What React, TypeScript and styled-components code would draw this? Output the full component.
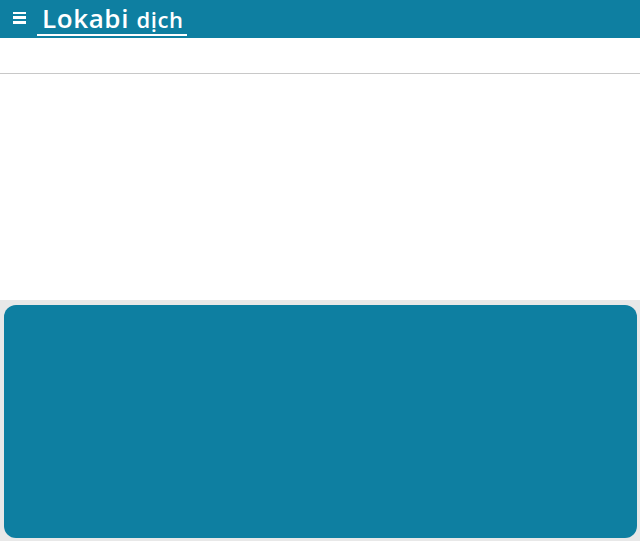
import styled, { createGlobalStyle } from 'styled-components';

const GlobalStyle = createGlobalStyle`
  html, body {
    margin: 0;
    padding: 0;
    background: #ffffff;
    font-family: "Open Sans", Arial, sans-serif;
  }
`;

const Page = styled.div`
  display: flex;
  flex-direction: column;
  height: 541px;
  overflow: hidden;
`;

const Header = styled.header`
  height: 38px;
  background-color: #0e7fa1;
  display: flex;
  align-items: center;
  padding-left: 13px;
  gap: 11px;
  flex-shrink: 0;
`;

const MenuButton = styled.button`
  width: 13px;
  height: 12px;
  padding: 0;
  border: 0;
  background: transparent;
  display: flex;
  flex-direction: column;
  justify-content: space-between;
  cursor: pointer;
  margin-bottom: 3px;

  span {
    display: block;
    height: 2.5px;
    background: #ffffff;
  }
`;

const Title = styled.a`
  color: #ffffff;
  text-decoration: none;
  border-bottom: 2px solid #ffffff;
  padding: 0 3px 0 5px;
  line-height: 30px;
  margin-top: 1px;
  font-weight: 600;
  font-size: 26px;
  letter-spacing: 0.6px;
  white-space: nowrap;
`;

const Small = styled.span`
  font-size: 22px;
`;

const SubBar = styled.div`
  height: 35px;
  border-bottom: 1px solid #c8c8c8;
  flex-shrink: 0;
`;

const Blank = styled.div`
  height: 226px;
  flex-shrink: 0;
`;

const Panel = styled.section`
  flex: 1;
  background: #e8e8e8;
  padding: 5px 3px 3px 4px;
  display: flex;
`;

const Card = styled.div`
  flex: 1;
  background-color: #0e7fa1;
  border-radius: 12px;
`;

const App = () => (
  <Page>
    <GlobalStyle />
    <Header>
      <MenuButton aria-label="menu">
        <span />
        <span />
        <span />
      </MenuButton>
      <Title href="#">
        Lokabi <Small>dịch</Small>
      </Title>
    </Header>
    <SubBar />
    <Blank />
    <Panel>
      <Card />
    </Panel>
  </Page>
);

export default App;
